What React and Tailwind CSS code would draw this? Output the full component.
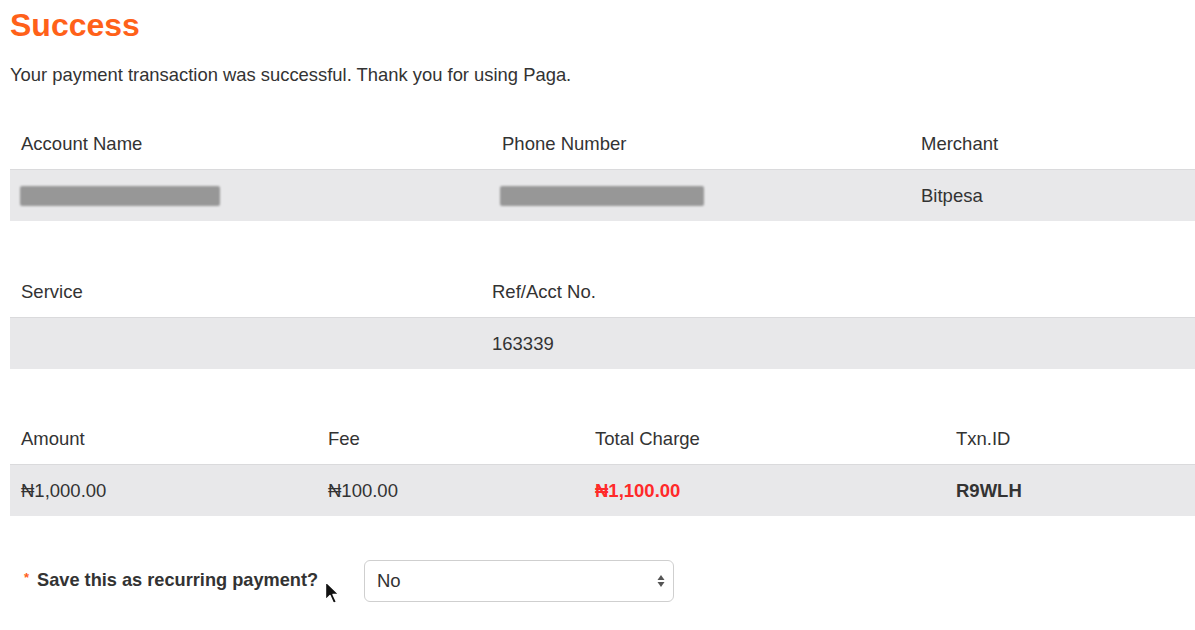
import React from "react";

function Redacted({ w }) {
  return (
    <div
      className="h-[20px] rounded-[2px] bg-[#8f8f8f] opacity-90 blur-[1px]"
      style={{ width: w }}
    />
  );
}

export default function App() {
  const head = "h-[51px] flex items-center";
  const row = "h-[52px] flex items-center bg-[#e8e8ea] border-t border-[#dadadc]";
  return (
    <div className="relative min-h-[630px] bg-white pl-[10px] font-['Liberation_Sans',Arial,sans-serif] text-[#333]">
      <h1 className="pt-[6px] text-[32px] leading-[38px] font-bold text-[#ff6119]">Success</h1>
      <p className="mt-[19px] text-[18.4px] leading-[24px] text-[#333]">
        Your payment transaction was successful. Thank you for using Paga.
      </p>

      <div className="mt-[31px] text-[18.5px]">
        <div className={head}>
          <div className="w-[481px] pl-[11px]">Account Name</div>
          <div className="w-[419px] pl-[11px]">Phone Number</div>
          <div className="flex-1 pl-[11px]">Merchant</div>
        </div>
        <div className={row}>
          <div className="w-[481px] pl-[10px]"><Redacted w={200} /></div>
          <div className="w-[419px] pl-[9px]"><Redacted w={204} /></div>
          <div className="flex-1 pl-[11px]">Bitpesa</div>
        </div>
      </div>

      <div className="mt-[45px] text-[18.5px]">
        <div className={head}>
          <div className="w-[471px] pl-[11px]">Service</div>
          <div className="flex-1 pl-[11px]">Ref/Acct No.</div>
        </div>
        <div className={row}>
          <div className="w-[471px] pl-[11px]"></div>
          <div className="flex-1 pl-[11px]">163339</div>
        </div>
      </div>

      <div className="mt-[44px] text-[18.5px]">
        <div className={head}>
          <div className="w-[307px] pl-[11px]">Amount</div>
          <div className="w-[267px] pl-[11px]">Fee</div>
          <div className="w-[361px] pl-[11px]">Total Charge</div>
          <div className="flex-1 pl-[11px]">Txn.ID</div>
        </div>
        <div className={row}>
          <div className="w-[307px] pl-[11px]">₦1,000.00</div>
          <div className="w-[267px] pl-[11px]">₦100.00</div>
          <div className="w-[361px] pl-[11px] font-bold text-[#ff2a2a]">₦1,100.00</div>
          <div className="flex-1 pl-[11px] font-bold">R9WLH</div>
        </div>
      </div>

      <div className="mt-[44px] flex items-center">
        <div className="w-[354px] pl-[14px] flex items-center text-[18.2px] font-bold">
          <span className="text-[#ff6119] text-[13px] mr-[8px] -mt-[6px]">*</span>
          <span>Save this as recurring payment?</span>
        </div>
        <div className="w-[310px] h-[42px] rounded-[6px] border border-[#cfcfcf] bg-white flex items-center justify-between pl-[12px] pr-[8px] text-[18.5px]">
          <span>No</span>
          <svg width="8" height="16" viewBox="0 0 8 16">
            <path d="M4 2 L7.5 7 H0.5 Z" fill="#555" />
            <path d="M4 14 L7.5 9 H0.5 Z" fill="#555" />
          </svg>
        </div>
      </div>

      <svg className="absolute left-[324px] top-[580px]" width="18" height="26" viewBox="0 0 18 26">
        <path d="M1.5 1.5 L1.5 20 L6 15.5 L9.5 23.5 L12.5 22 L9 14.5 L15 14.5 Z" fill="#111" stroke="#fff" strokeWidth="1.4" strokeLinejoin="round" />
      </svg>
    </div>
  );
}
